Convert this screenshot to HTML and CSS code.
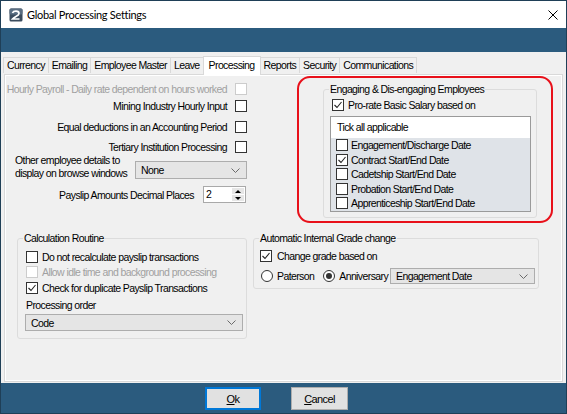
FILE: index.html
```html
<!DOCTYPE html>
<html lang="en">
<head>
    <meta charset="UTF-8">
    <meta name="viewport" content="width=device-width, initial-scale=1.0">
    <title>Global Processing Settings</title>
    <link rel="stylesheet" href="styles.css">
</head>
<body>
<div class="window">
    <div class="titlebar">
        <svg class="app-icon" width="14" height="14" viewBox="0 0 14 14">
            <rect x="0.5" y="0.5" width="13" height="13" rx="1.5" fill="#3b4c5e"/>
            <rect x="0.5" y="0.5" width="13" height="6" rx="1.5" fill="#5a6e82"/>
            <path d="M3.5 5 C4.5 2.5 10 2.5 10 5.5 C10 8 5.5 8.5 3.5 11 L10.5 11" stroke="#fff" stroke-width="1.7" fill="none"/>
        </svg>
        <span class="title">Global Processing Settings</span>
        <svg class="close" width="10" height="10" viewBox="0 0 10 10">
            <path d="M0.5 0.5 L9.5 9.5 M9.5 0.5 L0.5 9.5" stroke="#000" stroke-width="1"/>
        </svg>
    </div>
    <div class="band"></div>

    <div class="content">
        <div class="tabs">
            <div class="tab">Currency</div>
            <div class="tab">Emailing</div>
            <div class="tab">Employee Master</div>
            <div class="tab">Leave</div>
            <div class="tab selected">Processing</div>
            <div class="tab">Reports</div>
            <div class="tab">Security</div>
            <div class="tab">Communications</div>
        </div>

        <div class="page">
            <div class="top-row">
                <div class="left-col">
                    <div class="opt-row disabled">
                        <span>Hourly Payroll - Daily rate dependent on hours worked</span>
                        <span class="check off"></span>
                    </div>
                    <div class="opt-row gap-s">
                        <span>Mining Industry Hourly Input</span>
                        <span class="check"></span>
                    </div>
                    <div class="opt-row gap-l">
                        <span>Equal deductions in an Accounting Period</span>
                        <span class="check"></span>
                    </div>
                    <div class="opt-row gap-m">
                        <span>Tertiary Institution Processing</span>
                        <span class="check"></span>
                    </div>
                    <div class="browse-row">
                        <span class="browse-label">Other employee details to<br>display on browse windows</span>
                        <div class="combo browse-combo">
                            <span>None</span>
                            <svg width="9" height="5" viewBox="0 0 9 5"><polyline points="0.5,0.5 4.5,4.5 8.5,0.5" stroke="#6a6a6a" fill="none"/></svg>
                        </div>
                    </div>
                    <div class="decimal-row">
                        <span>Payslip Amounts Decimal Places</span>
                        <div class="spinner">
                            <span class="spin-value">2</span>
                            <span class="spin-btns">
                                <span class="spin-up"><i></i></span>
                                <span class="spin-down"><i></i></span>
                            </span>
                        </div>
                    </div>
                </div>

                <div class="highlight">
                    <fieldset class="group engaging">
                        <legend>Engaging &amp; Dis-engaging Employees</legend>
                        <div class="check-row prorate">
                            <span class="check"><svg width="10" height="10" viewBox="0 0 10 10"><polyline points="1.5,5 4,7.5 8.5,2" stroke="#222" stroke-width="1.1" fill="none"/></svg></span>
                            Pro-rate Basic Salary based on
                        </div>
                        <div class="listbox">
                            <div class="list-head">Tick all applicable</div>
                            <div class="list-items">
                                <div class="item"><span class="check"></span>Engagement/Discharge Date</div>
                                <div class="item"><span class="check"><svg width="10" height="10" viewBox="0 0 10 10"><polyline points="1.5,5 4,7.5 8.5,2" stroke="#222" stroke-width="1.1" fill="none"/></svg></span>Contract Start/End Date</div>
                                <div class="item"><span class="check"></span>Cadetship Start/End Date</div>
                                <div class="item"><span class="check"></span>Probation Start/End Date</div>
                                <div class="item"><span class="check"></span>Apprenticeship Start/End Date</div>
                            </div>
                        </div>
                    </fieldset>
                </div>
            </div>

            <div class="bottom-row">
                <fieldset class="group calc">
                    <legend>Calculation Routine</legend>
                    <div class="check-row"><span class="check"></span>Do not recalculate payslip transactions</div>
                    <div class="check-row disabled"><span class="check off"></span>Allow idle time and background processing</div>
                    <div class="check-row gap-t"><span class="check"><svg width="10" height="10" viewBox="0 0 10 10"><polyline points="1.5,5 4,7.5 8.5,2" stroke="#222" stroke-width="1.1" fill="none"/></svg></span>Check for duplicate Payslip Transactions</div>
                    <div class="field-label">Processing order</div>
                    <div class="combo order-combo">
                        <span>Code</span>
                        <svg width="9" height="5" viewBox="0 0 9 5"><polyline points="0.5,0.5 4.5,4.5 8.5,0.5" stroke="#6a6a6a" fill="none"/></svg>
                    </div>
                </fieldset>

                <fieldset class="group grade">
                    <legend>Automatic Internal Grade change</legend>
                    <div class="check-row"><span class="check"><svg width="10" height="10" viewBox="0 0 10 10"><polyline points="1.5,5 4,7.5 8.5,2" stroke="#222" stroke-width="1.1" fill="none"/></svg></span>Change grade based on</div>
                    <div class="radio-row">
                        <span class="radio"></span><span class="radio-label">Paterson</span>
                        <span class="radio on"></span><span>Anniversary</span>
                        <div class="combo grade-combo">
                            <span>Engagement Date</span>
                            <svg width="9" height="5" viewBox="0 0 9 5"><polyline points="0.5,0.5 4.5,4.5 8.5,0.5" stroke="#6a6a6a" fill="none"/></svg>
                        </div>
                    </div>
                </fieldset>
            </div>
        </div>
    </div>

    <div class="footer">
        <button class="btn default"><u>O</u>k</button>
        <button class="btn"><u>C</u>ancel</button>
    </div>
</div>
</body>
</html>
```

FILE: styles.css
```css
* {
    box-sizing: border-box;
}
body {
    margin: 0;
    font-family: "Liberation Sans Narrow", "Liberation Sans", Arial, sans-serif;
    font-size: 10.5px;
    letter-spacing: -0.6px;
    color: #000;
}
.window {
    width: 567px;
    height: 414px;
    border: 1px solid #1f3f57;
    background-color: #2b5b7e;
    display: flex;
    flex-direction: column;
}
.titlebar {
    height: 27px;
    background-color: #fff;
    display: flex;
    align-items: center;
    padding-left: 8px;
    flex: none;
}
.title {
    font-family: Lato, "Liberation Sans", sans-serif;
    font-size: 11px;
    letter-spacing: -0.3px;
    margin-left: 4px;
}
.close {
    margin-left: auto;
    margin-right: 8px;
}
.band {
    height: 24px;
    flex: none;
}
.content {
    height: 331px;
    flex: none;
    background-color: #f0f0f0;
    padding: 3px 2px 0 2px;
}
.tabs {
    display: flex;
    align-items: flex-end;
    height: 19px;
    position: relative;
    z-index: 1;
}
.tab {
    height: 16px;
    line-height: 14px;
    padding: 0 3px;
    border: 1px solid #d9d9d9;
    border-bottom: none;
    margin-right: -1px;
    background-color: #f0f0f0;
    margin-bottom: 1px;
}
.tab.selected {
    height: 19px;
    line-height: 16px;
    background-color: #fff;
    margin-bottom: -1px;
    padding: 0 5px;
}
.page {
    margin-left: 1px;
    width: 559px;
    height: 308px;
    border: 1px solid #d9d9d9;
    box-shadow: inset 0 0 0 1px #fff;
    padding: 1px 0 0 8px;
}
.top-row {
    display: flex;
    height: 147px;
}
.left-col {
    width: 234px;
    padding-top: 6px;
}
.opt-row {
    display: flex;
    justify-content: flex-end;
    align-items: center;
    gap: 8px;
    height: 13px;
    white-space: nowrap;
}
.gap-s { margin-top: 4px; }
.gap-m { margin-top: 7px; }
.gap-l { margin-top: 8px; }
.disabled {
    color: #a0a0a0;
}
.check {
    width: 12px;
    height: 12px;
    flex: none;
    border: 1px solid #333;
    background-color: #fff;
    display: inline-flex;
    align-items: center;
    justify-content: center;
}
.check.off {
    border-color: #cccccc;
}
.browse-row {
    display: flex;
    justify-content: space-between;
    margin-top: 1px;
    height: 26px;
}
.browse-label {
    margin-left: 2px;
    line-height: 13px;
    white-space: nowrap;
}
.combo {
    height: 18px;
    flex: none;
    background-color: #e5e5e5;
    border: 1px solid #adadad;
    display: flex;
    align-items: center;
    padding: 0 6px 0 5px;
}
.combo svg {
    margin-left: auto;
}
.browse-combo {
    width: 112px;
    margin-top: 7px;
}
.decimal-row {
    display: flex;
    justify-content: flex-end;
    align-items: center;
    gap: 9px;
    margin-top: 6px;
    height: 17px;
    padding-right: 1px;
}
.spinner {
    width: 43px;
    height: 17px;
    border: 1px solid #a9a9a9;
    background-color: #fff;
    display: flex;
}
.spin-value {
    flex: 1;
    padding-left: 2px;
    line-height: 15px;
}
.spin-btns {
    width: 12px;
    display: flex;
    flex-direction: column;
    margin: 1px;
}
.spin-up, .spin-down {
    flex: 1;
    background-color: #e6e6e6;
    display: flex;
    align-items: center;
    justify-content: center;
}
.spin-up {
    border-bottom: 1px solid #fff;
}
.spin-up i {
    border-left: 3px solid transparent;
    border-right: 3px solid transparent;
    border-bottom: 3px solid #000;
}
.spin-down i {
    border-left: 3px solid transparent;
    border-right: 3px solid transparent;
    border-top: 3px solid #000;
}
.highlight {
    margin-left: 50px;
    width: 256px;
    height: 147px;
    border: 2px solid #e8101a;
    border-radius: 13px;
}
.group {
    margin: 0;
    min-width: 0;
    border: 1px solid #dcdcdc;
    border-radius: 3px;
    padding: 0 3px 0 5px;
}
.group legend {
    padding: 0 1px;
    line-height: 13px;
}
.engaging {
    margin: 5px 0 0 24px;
    width: 214px;
    height: 135px;
    padding-top: 2px;
}
.check-row {
    display: flex;
    align-items: center;
    gap: 4px;
    height: 15px;
    padding-left: 3px;
    white-space: nowrap;
}
.prorate {
    height: 13px;
}
.listbox {
    margin: 5px 0 0 1px;
    width: 201px;
    height: 96px;
    border: 1px solid #9a9a9a;
}
.list-head {
    height: 21px;
    line-height: 21px;
    padding-left: 6px;
    background-color: #fff;
}
.list-items {
    background-color: #dfe3e8;
    height: 73px;
}
.item {
    height: 14.5px;
    display: flex;
    align-items: center;
    gap: 3px;
    padding-left: 5px;
    white-space: nowrap;
}
.bottom-row {
    display: flex;
    margin-top: 9px;
    padding-left: 4px;
}
.calc {
    width: 230px;
    height: 107px;
    padding-top: 4px;
}
.gap-t {
    margin-top: 1px;
}
.field-label {
    margin-top: 4px;
    padding-left: 3px;
    line-height: 13px;
}
.order-combo {
    width: 218px;
    height: 17px;
    margin: 2px 0 0 2px;
}
.grade {
    margin-left: 6px;
    width: 286px;
    height: 57px;
    padding-top: 3px;
}
.grade .check-row {
    padding-left: 1px;
    gap: 5px;
}
.radio-row {
    display: flex;
    align-items: center;
    margin-top: 5px;
    height: 16px;
    padding-left: 2px;
    white-space: nowrap;
}
.radio {
    width: 12px;
    height: 12px;
    flex: none;
    border: 1px solid #333;
    border-radius: 50%;
    background-color: #fff;
    display: inline-flex;
    align-items: center;
    justify-content: center;
    margin-right: 4px;
}
.radio.on::after {
    content: "";
    width: 6px;
    height: 6px;
    border-radius: 50%;
    background-color: #333;
}
.radio-label {
    margin-right: 9px;
}
.grade-combo {
    width: 145px;
    height: 16px;
    margin-left: auto;
}
.footer {
    flex: 1;
    padding: 4px 0 0 204px;
    display: flex;
    align-items: flex-start;
}
.btn {
    width: 56px;
    height: 23px;
    margin: 0;
    padding: 0;
    font-family: inherit;
    font-size: 11px;
    letter-spacing: inherit;
    color: #000;
    background-color: #e1e1e1;
    border: 1px solid #adadad;
}
.btn.default {
    border: 2px solid #0078d7;
}
.btn + .btn {
    margin-left: 30px;
    width: 57px;
}
```
